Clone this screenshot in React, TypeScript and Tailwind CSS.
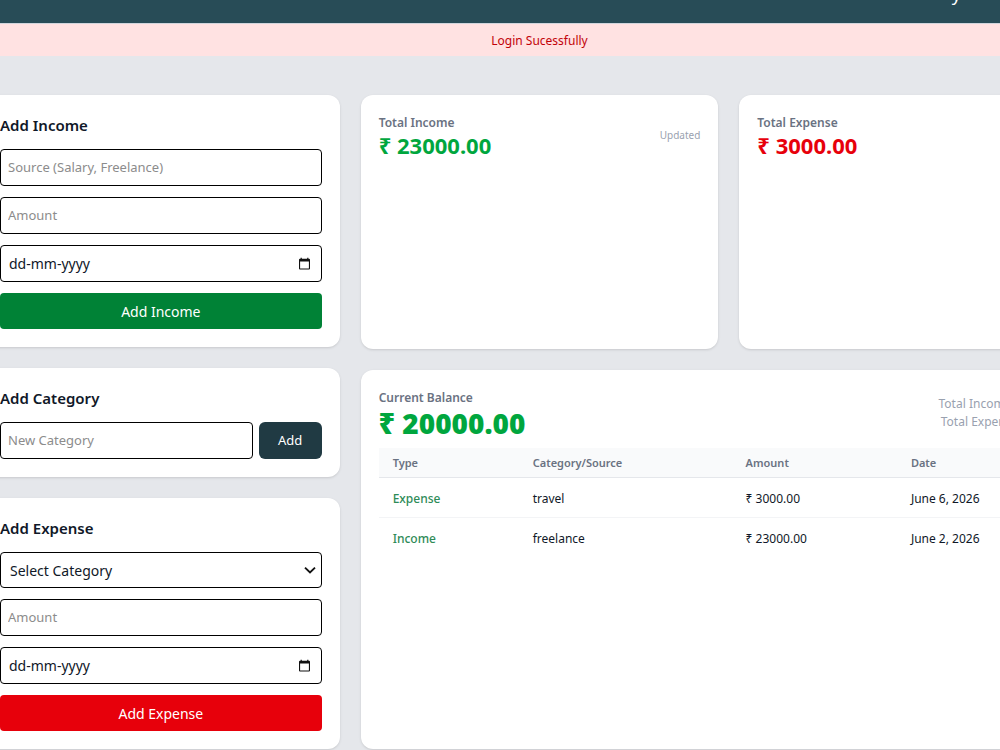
import React from 'react';

const transactions = [
  { type: 'Expense', source: 'travel', amount: '₹ 3000.00', date: 'June 6, 2026' },
  { type: 'Income', source: 'freelance', amount: '₹ 23000.00', date: 'June 2, 2026' },
];

const inputClass =
  'block w-full h-[37px] px-[7px] pb-[2px] text-[13px] text-gray-900 bg-white border border-black rounded placeholder:text-[#8c8c8c] placeholder:opacity-100';

const CalendarIcon = () => (
  <svg className="absolute right-[11px] top-3 pointer-events-none" width="13" height="13" viewBox="0 0 13 13">
    <path d="M2.6 0.8h1.2v0.9h5.4v-0.9h1.2v0.9h0.6a1 1 0 0 1 1 1v8.8a1 1 0 0 1-1 1H2a1 1 0 0 1-1-1V2.7a1 1 0 0 1 1-1h0.6zM2.1 4.6v6.8h8.8V4.6z" fill="#111" fillRule="evenodd" />
  </svg>
);

const DateField = ({ label }: { label: string }) => (
  <div className="relative">
    <input type="text" aria-label={label} placeholder="dd-mm-yyyy" className="block w-full h-[37px] px-2 text-sm bg-white border border-black rounded placeholder:text-gray-900 placeholder:opacity-100" />
    <CalendarIcon />
  </div>
);

const Card = ({ className = '', children }: { className?: string; children: React.ReactNode }) => (
  <section className={`bg-white rounded-xl shadow p-[18px] ${className}`}>{children}</section>
);

const CardTitle = ({ children }: { children: React.ReactNode }) => (
  <h2 className="text-[15px] leading-[25px] font-semibold text-gray-900">{children}</h2>
);

export default function App() {
  return (
    <div className="min-h-screen overflow-hidden bg-gray-200 text-gray-900 font-['Noto_Sans','Open_Sans',sans-serif]">
      <div className="-ml-[39px] -mr-[118px]">
        <header className="h-[23px] bg-[#284c57] flex items-end justify-end overflow-hidden pr-[157px]">
          <span className="text-lg leading-[58px] h-[58px] text-white">y</span>
        </header>

        <div className="h-[33px] pt-px flex items-center justify-center bg-red-100 text-red-700 text-xs border-t border-gray-300">
          Login Sucessfully
        </div>

        <main className="grid grid-cols-3 gap-[21px] px-[21px] pt-[39px]">
          {/* Forms */}
          <div className="row-span-2 flex flex-col gap-[21px]">
            <Card>
              <form className="flex flex-col gap-[11px]">
                <CardTitle>Add Income</CardTitle>
                <input type="text" aria-label="Source" placeholder="Source (Salary, Freelance)" className={inputClass} />
                <input type="text" aria-label="Income amount" placeholder="Amount" className={inputClass} />
                <DateField label="Income date" />
                <button type="button" className="h-9 pt-[2px] rounded bg-green-700 text-white text-sm">Add Income</button>
              </form>
            </Card>

            <Card>
              <form className="flex flex-col gap-[11px]">
                <CardTitle>Add Category</CardTitle>
                <div className="flex gap-[6px]">
                  <input type="text" aria-label="New category" placeholder="New Category" className={inputClass} />
                  <button type="button" className="h-[37px] w-[63px] shrink-0 rounded-md bg-[#203a43] text-white text-[13px]">Add</button>
                </div>
              </form>
            </Card>

            <Card>
              <form className="flex flex-col gap-[11px]">
                <CardTitle>Add Expense</CardTitle>
                <div className="relative">
                  <select aria-label="Category" className="block w-full h-9 pt-[2px] pl-[9px] pr-8 text-sm bg-white border border-black rounded appearance-none">
                    <option>Select Category</option>
                  </select>
                  <svg className="absolute right-[6px] top-3 pointer-events-none" width="12" height="12" viewBox="0 0 12 12">
                    <path d="M1 3.6L6 8.4L11 3.6" fill="none" stroke="#111" strokeWidth="1.9" />
                  </svg>
                </div>
                <input type="text" aria-label="Expense amount" placeholder="Amount" className={inputClass} />
                <DateField label="Expense date" />
                <button type="button" className="h-9 pt-[2px] rounded bg-[#e7000b] text-white text-sm">Add Expense</button>
              </form>
            </Card>
          </div>

          {/* Totals */}
          <Card>
            <div className="flex items-center justify-between">
              <div>
                <h3 className="text-xs leading-5 font-semibold text-gray-500">Total Income</h3>
                <p className="text-[22px] leading-6 font-bold text-green-600">₹ 23000.00</p>
              </div>
              <span className="text-[10px] text-gray-400">Updated</span>
            </div>
          </Card>

          <Card>
            <h3 className="text-xs leading-5 font-semibold text-gray-500">Total Expense</h3>
            <p className="text-[22px] leading-6 font-bold text-red-600">₹ 3000.00</p>
          </Card>

          {/* Balance and history */}
          <Card className="col-span-2">
            <div className="flex items-center justify-between">
              <div>
                <h3 className="text-xs leading-5 font-semibold text-gray-500">Current Balance</h3>
                <p className="text-[28px] leading-[30px] font-black text-green-600">₹ 20000.00</p>
              </div>
              <div className="text-right text-xs leading-[18px] text-gray-400">
                <p>Total Income: ₹ 23000.00</p>
                <p>Total Expense: ₹ 3000.00</p>
              </div>
            </div>

            <table className="w-full mt-[10px] table-fixed text-left text-xs leading-[18px]">
              <thead className="bg-gray-50 text-gray-500 text-[11px]">
                <tr className="h-[30px] border-b border-gray-200">
                  <th className="w-[20%] px-[14px] pt-[2px] font-semibold">Type</th>
                  <th className="w-[30.4%] px-[14px] pt-[2px] font-semibold">Category/Source</th>
                  <th className="w-[23.6%] px-[14px] pt-[2px] font-semibold">Amount</th>
                  <th className="px-[14px] pt-[2px] font-semibold">Date</th>
                </tr>
              </thead>
              <tbody>
                {transactions.map((t) => (
                  <tr key={t.type} className="h-10 border-b border-gray-100 last:border-b-0">
                    <td className="px-[14px] pt-[2px] font-medium text-[#2e8b57]">{t.type}</td>
                    <td className="px-[14px] pt-[2px]">{t.source}</td>
                    <td className="px-[14px] pt-[2px]">{t.amount}</td>
                    <td className="px-[14px] pt-[2px]">{t.date}</td>
                  </tr>
                ))}
              </tbody>
            </table>
          </Card>
        </main>
      </div>
    </div>
  );
}
